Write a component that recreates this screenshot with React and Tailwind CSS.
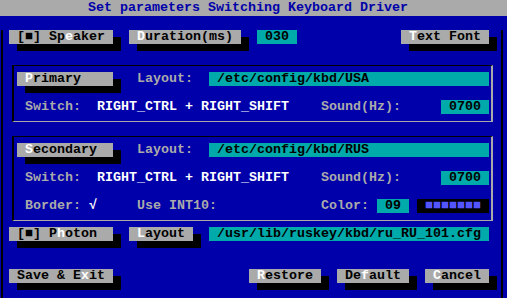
import React from 'react';

const Btn = ({ pre = '', hot, post = '', className = '' }) => (
	<div className={'h-[14px] leading-[14px] bg-[#aaaaaa] text-black pl-[8px] whitespace-pre shadow-[8px_7px_0_#000] shrink-0 ' + className}>
		{pre}
		<span className="text-white">{hot}</span>
		{post}
	</div>
);

const Field = ({ text, className = '' }) => (
	<div className={'h-[14px] leading-[14px] bg-[#00aaaa] text-black pl-[8px] whitespace-pre shrink-0 ' + className}>
		{text}
	</div>
);

const Label = ({ text, className = '' }) => (
	<span className={'h-[14px] leading-[14px] text-[#aaaaaa] whitespace-pre shrink-0 ' + className}>{text}</span>
);

const Value = ({ text, className = '' }) => (
	<span className={'h-[14px] leading-[14px] text-white whitespace-pre shrink-0 ' + className}>{text}</span>
);

const SwitchRow = () => (
	<div className="flex h-[14px] mt-[14px] ml-[11px]">
		<Label text="Switch:" className="w-[72px]" />
		<Value text="RIGHT_CTRL + RIGHT_SHIFT" className="w-[224px]" />
		<Label text="Sound(Hz):" className="w-[120px]" />
		<Field text="0700" className="w-[48px]" />
	</div>
);

export default function App() {
	return (
		<div
			className="w-[507px] h-[298px] bg-[#0000aa] overflow-hidden font-bold text-[13.33px]"
			style={{ fontFamily: '"Liberation Mono", "DejaVu Sans Mono", monospace' }}>
			{/* title */}
			<div className="h-[16px] leading-[16px] bg-[#aaaaaa] text-[#0000aa] pl-[88px] whitespace-pre">
				Set parameters Switching Keyboard Driver
			</div>

			<div className="ml-[1px] w-[502px] h-[281px] border-l-2 border-r-2 border-b-2 border-black">
				{/* speaker row */}
				<div className="flex mt-[14px] ml-[6px]">
					<Btn pre="[■] Sp" hot="e" post="aker" className="w-[104px]" />
					<Btn hot="D" post="uration(ms)" className="w-[112px] ml-[16px]" />
					<Field text="030" className="w-[40px] ml-[16px]" />
					<Btn hot="T" post="ext Font" className="w-[88px] ml-[104px]" />
				</div>

				{/* primary */}
				<div className="mt-[21px] ml-[9px] w-[481px] border-t border-l-2 border-black border-r-2 border-r-[#aaaaaa] border-b border-b-[#aaaaaa] pt-[6px] pb-[7px]">
					<div className="flex ml-[3px]">
						<Btn hot="P" post="rimary" className="w-[96px]" />
						<Label text="Layout:" className="w-[72px] ml-[24px]" />
						<Field text="/etc/config/kbd/USA" className="w-[280px]" />
					</div>
					<SwitchRow />
				</div>

				{/* secondary */}
				<div className="mt-[14px] ml-[9px] w-[481px] border-t border-l-2 border-black border-r-2 border-r-[#aaaaaa] border-b border-b-[#aaaaaa] pt-[6px] pb-[7px]">
					<div className="flex ml-[3px]">
						<Btn hot="S" post="econdary" className="w-[96px]" />
						<Label text="Layout:" className="w-[72px] ml-[24px]" />
						<Field text="/etc/config/kbd/RUS" className="w-[280px]" />
					</div>
					<SwitchRow />
					<div className="flex h-[14px] mt-[14px] ml-[11px]">
						<Label text="Border:" className="w-[64px]" />
						<Value text="√" className="w-[48px]" />
						<Label text="Use INT10:" className="w-[184px]" />
						<Label text="Color:" className="w-[56px]" />
						<Field text="09" className="w-[32px]" />
						<div className="w-[72px] h-[14px] leading-[14px] ml-[8px] bg-black text-[#5555ff] pl-[8px] whitespace-pre">
							■■■■■■■
						</div>
					</div>
				</div>

				{/* photon row */}
				<div className="flex mt-[6px] ml-[6px]">
					<Btn pre="[■] P" hot="h" post="oton" className="w-[104px]" />
					<Btn hot="L" post="ayout" className="w-[64px] ml-[16px]" />
					<Field text="/usr/lib/ruskey/kbd/ru_RU_101.cfg" className="w-[280px] ml-[16px]" />
				</div>

				{/* bottom buttons */}
				<div className="flex mt-[28px] ml-[6px]">
					<Btn pre="Save & E" hot="x" post="it" className="w-[104px]" />
					<Btn hot="R" post="estore" className="w-[72px] ml-[136px]" />
					<Btn pre="De" hot="f" post="ault" className="w-[72px] ml-[16px]" />
					<Btn hot="C" post="ancel" className="w-[64px] ml-[16px]" />
				</div>
			</div>
		</div>
	);
}
